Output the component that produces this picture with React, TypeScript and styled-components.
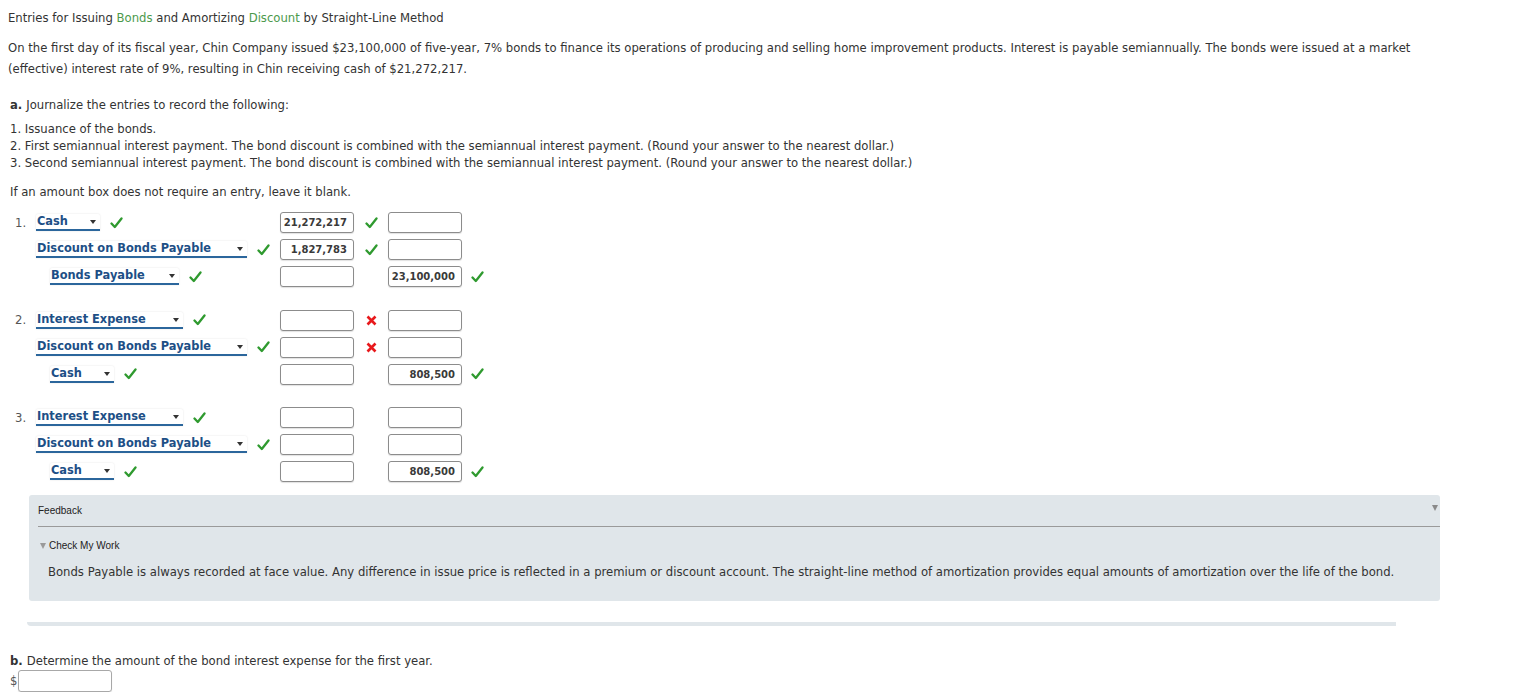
import React from "react";
import styled, { createGlobalStyle } from "styled-components";

const GlobalStyle = createGlobalStyle`
  body {
    margin: 8px;
    background: #ffffff;
    color: #333333;
    font-family: "DejaVu Sans", Verdana, sans-serif;
    font-size: 11.65px;
  }
`;

const colors = {
  text: "#333333",
  green: "#4c9a4c",
  check: "#2f9a2f",
  cross: "#e8191c",
  account: "#1d4f86",
  underline: "#2b669c",
  panel: "#e0e6ea",
  border: "#8c8c8c",
};

const Page = styled.div`
  width: 1517px;
  padding-top: 1px;
`;

const Title = styled.div`
  line-height: 18px;
`;

const TermLink = styled.span`
  color: ${colors.green};
`;

const Intro = styled.p`
  margin: 11px 0 0;
  line-height: 21px;
`;

const Part = styled.div`
  padding-left: 2px;
`;

const PartHead = styled.div<{ $top: number }>`
  margin-top: ${(p) => p.$top}px;
  line-height: 17px;
`;

const PartLetter = styled.b`
  margin-right: 4px;
`;

const StepList = styled.ol`
  margin: 7px 0 0;
  padding: 0;
  list-style: none;
  line-height: 17px;
`;

const Hint = styled.div`
  margin-top: 12px;
  line-height: 17px;
`;

const Journal = styled.div`
  margin-top: 8px;
  margin-left: 7px;
  display: flex;
  flex-direction: column;
  gap: 16.5px;
`;

const Entry = styled.div`
  display: flex;
  flex-direction: column;
`;

const Row = styled.div`
  display: grid;
  grid-template-columns: 21px 244px 74px 34px 74px 30px;
  align-items: center;
  height: 27px;
`;

const Num = styled.span`
  color: #555555;
`;

const AccountCell = styled.div<{ $indent?: boolean }>`
  display: flex;
  align-items: center;
  gap: 10px;
  padding-left: ${(p) => (p.$indent ? 14 : 0)}px;
`;

const AccountSelect = styled.div<{ $w: number }>`
  position: relative;
  width: ${(p) => p.$w}px;
  height: 17px;
  box-sizing: border-box;
  padding-left: 1px;
  background: #ffffff;
  border-bottom: 2px solid ${colors.underline};
  border-radius: 2px 2px 0 0;
  box-shadow: 0 0 2px rgba(0, 0, 0, 0.12);
  color: ${colors.account};
  font-weight: bold;
  font-size: 11.4px;
  line-height: 15px;
  white-space: nowrap;
`;

const Caret = styled.span`
  position: absolute;
  right: 4px;
  top: 6px;
  width: 0;
  height: 0;
  border-left: 3px solid transparent;
  border-right: 3px solid transparent;
  border-top: 4px solid #333333;
`;

const Amount = styled.div`
  width: 74px;
  height: 21px;
  box-sizing: border-box;
  border: 1px solid ${colors.border};
  border-radius: 3px;
  box-shadow: 0 1px 1px rgba(0, 0, 0, 0.12);
  background: #ffffff;
  padding-right: 6px;
  text-align: right;
  font-size: 10px;
  font-weight: bold;
  line-height: 19px;
  color: #3a3a3a;
`;

const Mark = styled.span`
  display: flex;
  justify-content: center;
`;

const Feedback = styled.section`
  margin: 10px 0 0 21px;
  width: 1411px;
  height: 106px;
  box-sizing: border-box;
  background: ${colors.panel};
  border-radius: 3px;
  padding-left: 9px;
`;

const FeedbackHead = styled.div`
  position: relative;
  height: 31px;
  border-bottom: 1px solid #9a9a9a;
  font-family: "Liberation Sans", Arial, sans-serif;
  font-size: 10px;
  line-height: 31px;
  color: #222222;
`;

const Collapse = styled.span`
  position: absolute;
  right: 2px;
  top: 10px;
  border-left: 3px solid transparent;
  border-right: 3px solid transparent;
  border-top: 6px solid #8a8a8a;
`;

const CheckWork = styled.div`
  margin-top: 13px;
  display: flex;
  align-items: center;
  gap: 3px;
  font-family: "Liberation Sans", Arial, sans-serif;
  font-size: 10px;
  color: #222222;
  padding-left: 2px;
`;

const SmallTri = styled.span`
  border-left: 3px solid transparent;
  border-right: 3px solid transparent;
  border-top: 6px solid #9a9a9a;
`;

const FeedbackText = styled.p`
  margin: 13px 0 0 10px;
  line-height: 17px;
  color: #333333;
`;

const Divider = styled.div`
  margin: 21px 0 0 19px;
  width: 1369px;
  height: 4px;
  background: ${colors.panel};
  border-radius: 0 0 0 4px;
`;

const AnswerRow = styled.div`
  display: flex;
  align-items: center;
  gap: 1px;
  color: #555555;
`;

const AnswerBox = styled.div`
  width: 94px;
  height: 22px;
  box-sizing: border-box;
  border: 1px solid #a8a8a8;
  border-radius: 3px;
  box-shadow: 0 1px 1px rgba(0, 0, 0, 0.12);
`;

const Check = () => (
  <svg width="13" height="12" viewBox="0 0 13 12">
    <path d="M1.5 6.5 L4.8 10 L11.5 1.5" fill="none" stroke={colors.check} strokeWidth="2.3" strokeLinecap="round" strokeLinejoin="round" />
  </svg>
);

const Cross = () => (
  <svg width="11" height="11" viewBox="0 0 11 11">
    <path d="M1.5 1.5 L9.5 9.5 M9.5 1.5 L1.5 9.5" fill="none" stroke={colors.cross} strokeWidth="2.6" />
  </svg>
);

type Result = "ok" | "bad" | null;

interface Line {
  account: string;
  width: number;
  indent?: boolean;
  debit?: string;
  debitMark?: Result;
  credit?: string;
  creditMark?: Result;
}

const MarkFor = ({ r }: { r?: Result }) => (
  <Mark>{r === "ok" ? <Check /> : r === "bad" ? <Cross /> : null}</Mark>
);

const entries: Line[][] = [
  [
    { account: "Cash", width: 64, debit: "21,272,217", debitMark: "ok" },
    { account: "Discount on Bonds Payable", width: 211, debit: "1,827,783", debitMark: "ok" },
    { account: "Bonds Payable", width: 129, indent: true, credit: "23,100,000", creditMark: "ok" },
  ],
  [
    { account: "Interest Expense", width: 147, debitMark: "bad" },
    { account: "Discount on Bonds Payable", width: 211, debitMark: "bad" },
    { account: "Cash", width: 64, indent: true, credit: "808,500", creditMark: "ok" },
  ],
  [
    { account: "Interest Expense", width: 147 },
    { account: "Discount on Bonds Payable", width: 211 },
    { account: "Cash", width: 64, indent: true, credit: "808,500", creditMark: "ok" },
  ],
];

export default function App() {
  return (
    <Page>
      <GlobalStyle />
      <Title>
        Entries for Issuing <TermLink>Bonds</TermLink> and Amortizing <TermLink>Discount</TermLink> by Straight-Line Method
      </Title>
      <Intro>
        On the first day of its fiscal year, Chin Company issued $23,100,000 of five-year, 7% bonds to finance its operations of producing and selling home improvement products. Interest is payable semiannually. The bonds were issued at a market
        <br />
        (effective) interest rate of 9%, resulting in Chin receiving cash of $21,272,217.
      </Intro>

      <Part>
        <PartHead $top={17}>
          <PartLetter>a.</PartLetter>Journalize the entries to record the following:
        </PartHead>
        <StepList>
          <li>1. Issuance of the bonds.</li>
          <li>2. First semiannual interest payment. The bond discount is combined with the semiannual interest payment. (Round your answer to the nearest dollar.)</li>
          <li>3. Second semiannual interest payment. The bond discount is combined with the semiannual interest payment. (Round your answer to the nearest dollar.)</li>
        </StepList>
        <Hint>If an amount box does not require an entry, leave it blank.</Hint>
      </Part>

      <Journal>
        {entries.map((lines, i) => (
          <Entry key={i}>
            {lines.map((l, j) => (
              <Row key={j}>
                <Num>{j === 0 ? `${i + 1}.` : ""}</Num>
                <AccountCell $indent={l.indent}>
                  <AccountSelect $w={l.width}>
                    {l.account}
                    <Caret />
                  </AccountSelect>
                  <Check />
                </AccountCell>
                <Amount>{l.debit}</Amount>
                <MarkFor r={l.debitMark} />
                <Amount>{l.credit}</Amount>
                <MarkFor r={l.creditMark} />
              </Row>
            ))}
          </Entry>
        ))}
      </Journal>

      <Feedback>
        <FeedbackHead>
          Feedback
          <Collapse />
        </FeedbackHead>
        <CheckWork>
          <SmallTri />
          Check My Work
        </CheckWork>
        <FeedbackText>
          Bonds Payable is always recorded at face value. Any difference in issue price is reflected in a premium or discount account. The straight-line method of amortization provides equal amounts of amortization over the life of the bond.
        </FeedbackText>
      </Feedback>

      <Divider />

      <Part>
        <PartHead $top={27}>
          <PartLetter>b.</PartLetter>Determine the amount of the bond interest expense for the first year.
        </PartHead>
        <AnswerRow>
          $<AnswerBox />
        </AnswerRow>
      </Part>
    </Page>
  );
}
